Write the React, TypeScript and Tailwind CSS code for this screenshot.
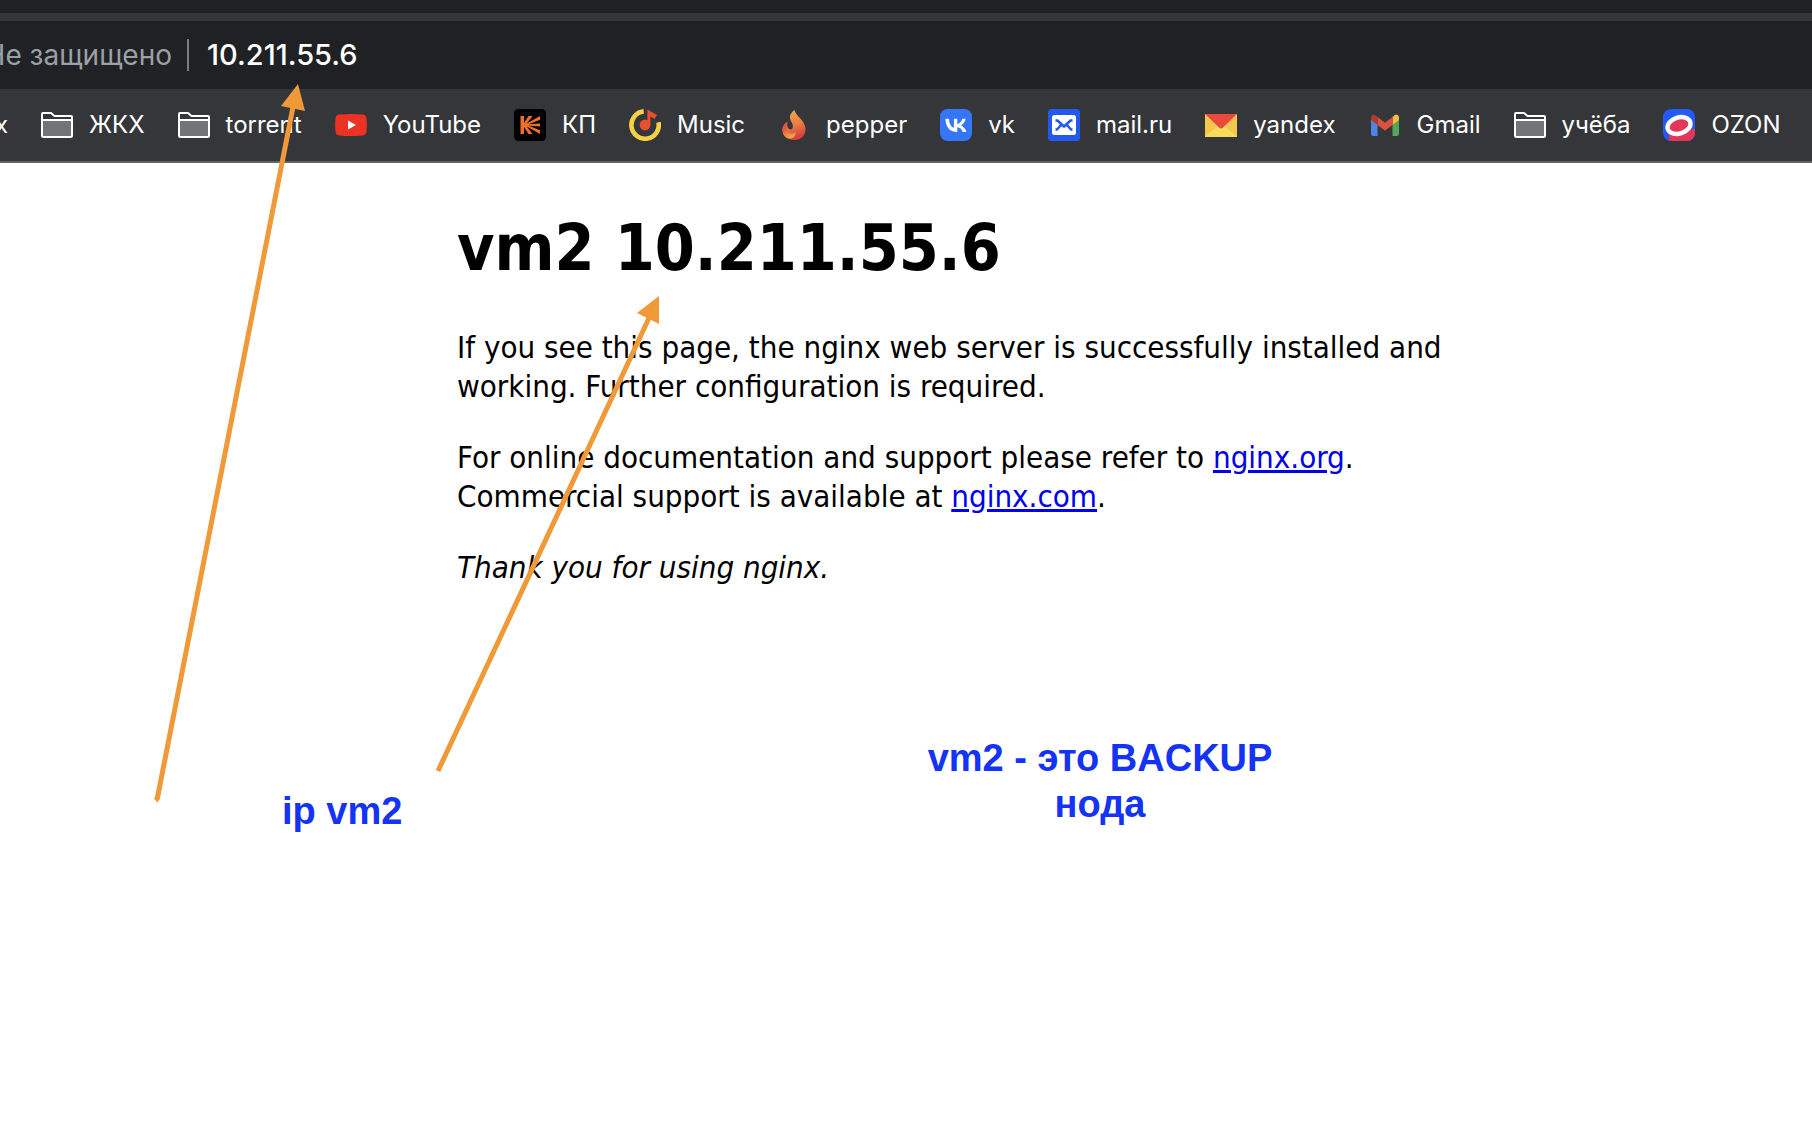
import React from "react";

const FolderIcon = () => (
  <svg viewBox="0 0 32 32" className="h-8 w-8 shrink-0" aria-hidden="true">
    <path d="M2 9 V27 H30 V9 Z" fill="#737477" />
    <path d="M2 5 H10 L13 8 H30 V10 H2 Z" fill="#35363a" />
    <path d="M1 27 V5 Q1 4 2 4 H10 L13.5 7 H30 Q31 7 31 8 V26.5 Q31 28 29.5 28 H2.5 Q1 28 1 26.5 Z M1 11 H31" fill="none" stroke="#fff" strokeWidth="2" />
  </svg>
);

const YouTubeIcon = () => (
  <svg viewBox="0 0 32 32" className="h-8 w-8 shrink-0" aria-hidden="true">
    <path d="M4 5.6 Q16 4.400 28 5.600 Q31 6 31.400 9 Q32.400 16 31.400 23 Q31 26 28 26.400 Q16 27.600 4 26.400 Q1 26 .6 23 Q-.4 16 .6 9 Q1 6 4 5.600 Z" fill="#eb3223" />
    <path d="M13 11.500 L21 16 L13 20.500 Z" fill="#fff" />
  </svg>
);

const KinoIcon = () => (
  <svg viewBox="0 0 32 32" className="h-8 w-8 shrink-0" aria-hidden="true">
    <rect width="32" height="32" rx="4.500" fill="#000" />
    <path d="M6.500 7 H10 V14 L14.500 7 H18.600 L12.800 14.600 L26 7 V10.800 L14.800 15.300 L26 14.400 V17.600 L14.800 16.700 L26 21.200 V25 L12.800 17.400 L18.600 25 H14.500 L10 18 V25 H6.500 Z" fill="#ec6f2d" />
  </svg>
);

const MusicIcon = () => (
  <svg viewBox="0 0 32 32" className="h-8 w-8 shrink-0" aria-hidden="true">
    <path d="M14.700 2.400 A13.700 13.700 0 1 0 29.500 13.200" fill="none" stroke="#f6d145" strokeWidth="4.600" />
    <circle cx="16" cy="16" r="5.400" fill="#e9502e" />
    <path d="M18.400 16 V0.500 L28 6 L25.600 10 L21.400 7.600 V16 Z" fill="#e9502e" />
  </svg>
);

const FlameIcon = () => (
  <svg viewBox="0 0 32 32" className="h-8 w-8 shrink-0" aria-hidden="true">
    <defs>
      <linearGradient id="flame" x1="0" y1="0" x2=".3" y2="1">
        <stop offset="0" stopColor="#f3b04f" />
        <stop offset=".6" stopColor="#ec7f42" />
        <stop offset="1" stopColor="#d8413c" />
      </linearGradient>
      <linearGradient id="flameInner" x1="0" y1="0" x2=".3" y2="1">
        <stop offset="0" stopColor="#dc4a3b" />
        <stop offset=".5" stopColor="#e4603d" />
        <stop offset="1" stopColor="#f2a14c" />
      </linearGradient>
    </defs>
    <path d="M16.500 1 C17.500 7 27.500 11.500 27.500 20 C27.500 27 22.500 31 16.500 31 C9.500 31 4.500 27 4.500 21 C4.500 17 6.500 14.500 9.500 13 C8.500 17 10 20.500 12.500 20.500 C15.500 20.500 15.500 16 13.500 13 C10.500 8 12 4.500 16.500 1 Z" fill="url(#flame)" />
    <path d="M9.500 13 C6.500 14.500 4.500 17 4.500 21 C4.500 26 8 29.500 12 29.500 C15.500 29.500 18 27 17.500 22.500 C16 25 13 25.500 11 23.500 C8.500 21 8.500 17 9.500 13 Z" fill="url(#flameInner)" />
  </svg>
);

const VkIcon = () => (
  <svg viewBox="0 0 32 32" className="h-8 w-8 shrink-0" aria-hidden="true">
    <rect width="32" height="32" rx="7.500" fill="#3476f6" />
    <path d="M17 23 C9.700 23 5.600 18 5.400 9.800 H9 C9.150 15.800 11.800 18.300 13.900 18.800 V9.800 H17.300 V15 C19.400 14.800 21.600 12.400 22.300 9.800 H25.700 C25.100 13 22.800 15.400 21.100 16.400 C22.800 17.200 25.400 19.200 26.500 23 H22.800 C22 20.500 20 18.600 17.300 18.300 V23 Z" fill="#fff" />
  </svg>
);

const MailIcon = () => (
  <svg viewBox="0 0 32 32" className="h-8 w-8 shrink-0" aria-hidden="true">
    <rect width="32" height="32" rx="3.500" fill="#2459ee" />
    <rect x="4" y="6" width="24" height="20" rx="2.500" fill="#fff" />
    <path d="M7.500 11.500 H9.500 L16 17.500 L22.500 11.500 H24.500 M7.500 20.500 H9 L13 16 M24.500 20.500 H23 L19 16" fill="none" stroke="#2459ee" strokeWidth="2.400" />
  </svg>
);

const YandexMailIcon = () => (
  <svg viewBox="0 0 32 32" className="h-8 w-8 shrink-0" aria-hidden="true">
    <path d="M0 5 H32 V28 H0 Z" fill="#f5c74f" />
    <path d="M0 28 L16 14 L32 28 Z" fill="#f8dc5c" />
    <path d="M0 5 H32 L18 18.500 Q16 20.300 14 18.500 Z" fill="#eb4a3a" />
  </svg>
);

const GmailIcon = () => (
  <svg viewBox="0 0 32 32" className="h-8 w-8 shrink-0" aria-hidden="true">
    <path d="M2 10 L8.500 15 V27 H4 Q2 27 2 25 Z" fill="#5084ec" />
    <path d="M30 10 L23.500 15 V27 H28 Q30 27 30 25 Z" fill="#58a55c" />
    <path d="M23.500 8 L25.500 6.300 Q27.500 4.900 29 6.300 Q30 7.200 30 8.500 V11 L23.500 16 Z" fill="#f1bd42" />
    <path d="M8.500 8 L16 13.700 L23.500 8 V16 L16 21.700 L8.500 16 Z" fill="#d95140" />
    <path d="M8.500 8 L6.500 6.300 Q4.500 4.900 3 6.300 Q2 7.200 2 8.500 V11 L8.500 16 Z" fill="#b03a2e" />
  </svg>
);

const OzonIcon = () => (
  <svg viewBox="0 0 32 32" className="h-8 w-8 shrink-0" aria-hidden="true">
    <clipPath id="ozonClip"><rect width="32" height="32" rx="8" /></clipPath>
    <g clipPath="url(#ozonClip)">
      <rect width="32" height="32" fill="#2459f5" />
      <path d="M6 32 V25 L30 20 H32 V32 Z" fill="#e6355b" />
      <ellipse cx="16" cy="16.500" rx="11.800" ry="8" transform="rotate(-18 16 16.500)" fill="#e6355b" stroke="#fff" strokeWidth="4.400" />
    </g>
  </svg>
);

const bookmarks: { label: string; Icon: React.FC; folder?: boolean }[] = [
  { label: "ЖКХ", Icon: FolderIcon, folder: true },
  { label: "torrent", Icon: FolderIcon, folder: true },
  { label: "YouTube", Icon: YouTubeIcon },
  { label: "КП", Icon: KinoIcon },
  { label: "Music", Icon: MusicIcon },
  { label: "pepper", Icon: FlameIcon },
  { label: "vk", Icon: VkIcon },
  { label: "mail.ru", Icon: MailIcon },
  { label: "yandex", Icon: YandexMailIcon },
  { label: "Gmail", Icon: GmailIcon },
  { label: "учёба", Icon: FolderIcon, folder: true },
  { label: "OZON", Icon: OzonIcon },
];

function AddressBar() {
  return (
    <div className="flex h-[68px] items-center bg-[#202124] text-[28px] leading-8">
      <button type="button" className="flex w-[172px] shrink-0 justify-end overflow-hidden whitespace-nowrap text-[#9aa0a6]">
        Не защищено
      </button>
      <span className="ml-[15px] h-8 w-0.5 shrink-0 bg-[#7b7c7f]" />
      <input
        aria-label="Address"
        defaultValue="10.211.55.6"
        className="ml-[18px] min-w-0 flex-1 bg-transparent text-[29px] font-medium text-white outline-none"
      />
    </div>
  );
}

function BookmarksBar() {
  return (
    <nav className="flex h-[74px] items-center gap-[33px] overflow-hidden border-b-2 border-[#636468] bg-[#35363a] text-2xl whitespace-nowrap text-white">
      <button type="button" className="flex w-2 shrink-0 justify-end overflow-hidden">х</button>
      {bookmarks.map(({ label, Icon, folder }) =>
        folder ? (
          <button key={label} type="button" className="flex items-center gap-4">
            <Icon />
            {label}
          </button>
        ) : (
          <a key={label} href="#" className="flex items-center gap-4">
            <Icon />
            {label}
          </a>
        ),
      )}
    </nav>
  );
}

function Annotations() {
  return (
    <>
      <svg className="pointer-events-none absolute top-0 left-0 h-[820px] w-[680px]" viewBox="0 0 680 820" aria-hidden="true">
        <g fill="#f09938">
          <path d="M298 84 L305 111 L281 106 Z" />
          <path d="M154 798 L157.500 803 L161 793 L160 792 Z" />
          <path d="M659 296 V324 L637 313 Z" />
        </g>
        <path d="M157 800 L293 107 M438 771 L649 318" stroke="#f09938" strokeWidth="5" fill="none" />
      </svg>
      <p className="absolute top-[788px] left-[282px] text-[38px] leading-[46px] font-bold text-[#1433f5]">ip vm2</p>
      <p className="absolute top-[735px] left-[900px] w-[400px] text-center text-[38px] leading-[46px] font-bold text-[#1433f5]">
        vm2 - это BACKUP нода
      </p>
    </>
  );
}

export default function App() {
  return (
    <div className="relative min-h-screen overflow-hidden bg-white font-['Liberation_Sans',sans-serif]">
      <header className="font-['Inter',sans-serif]">
        <div className="h-[13px] bg-[#202124]" />
        <div className="h-2 bg-[#35363a]" />
        <AddressBar />
        <BookmarksBar />
      </header>
      <main className="ml-[457px] max-w-[1080px] pt-[46px] font-['DejaVu_Sans_Condensed','DejaVu_Sans',sans-serif] text-[31px] leading-[39px] text-black">
        <h1 className="text-[64px] leading-[78px] font-bold">vm2 10.211.55.6</h1>
        <p className="mt-[41px]">
          If you see this page, the nginx web server is successfully installed and working. Further configuration is required.
        </p>
        <p className="mt-8">
          For online documentation and support please refer to{" "}
          <a href="http://nginx.org/" className="text-[#0000ee] underline">nginx.org</a>.
          <br />
          Commercial support is available at{" "}
          <a href="http://nginx.com/" className="text-[#0000ee] underline">nginx.com</a>.
        </p>
        <p className="mt-8 italic">Thank you for using nginx.</p>
      </main>
      <Annotations />
    </div>
  );
}
